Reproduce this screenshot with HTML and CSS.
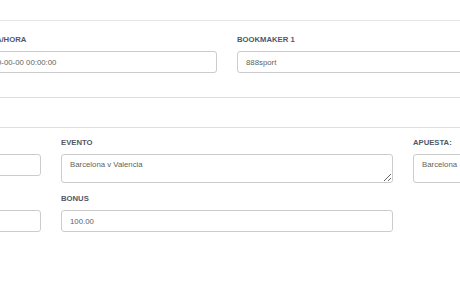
FILE: index.html
```html
<!DOCTYPE html>
<html lang="es">
<head>
<meta charset="utf-8">
<title>Apuesta</title>
<link rel="stylesheet" href="styles.css">
</head>
<body>
<div class="page">
  <section class="card card-top">
    <div class="grid grid-two">
      <div class="field">
        <label class="label">Fecha/Hora</label>
        <input class="control" type="text" value="0000-00-00 00:00:00">
      </div>
      <div class="field">
        <label class="label">Bookmaker 1</label>
        <input class="control" type="text" value="888sport">
      </div>
    </div>
  </section>
  <section class="card card-main">
    <div class="grid grid-three">
      <div class="field">
        <label class="label">&nbsp;</label>
        <input class="control" type="text" value="">
      </div>
      <div class="field">
        <label class="label">Evento</label>
        <textarea class="control area">Barcelona v Valencia</textarea>
      </div>
      <div class="field">
        <label class="label">Apuesta:</label>
        <textarea class="control area no-resize">Barcelona</textarea>
      </div>
      <div class="field">
        <label class="label">&nbsp;</label>
        <input class="control" type="text" value="">
      </div>
      <div class="field">
        <label class="label">Bonus</label>
        <input class="control" type="text" value="100.00">
      </div>
      <div class="field"></div>
    </div>
  </section>
</div>
</body>
</html>
```

FILE: styles.css
```css
html, body {
  margin: 0;
  padding: 0;
  background: #ffffff;
  overflow: hidden;
}
body {
  font-family: "Liberation Sans", Arial, sans-serif;
  width: 460px;
  height: 295px;
}
.page {
  margin-left: -59px;
  width: 573px;
  padding-top: 20px;
}
.card {
  background: #ffffff;
  border-top: 1px solid #e6e6e6;
  padding: 0 34px;
}
.card-top {
  padding-top: 13px;
  padding-bottom: 24px;
  border-bottom: 1px solid #dedede;
}
.card-main {
  margin-top: 29px;
  padding-top: 9px;
  padding-bottom: 80px;
  border-top-color: #dedede;
}
.grid {
  display: grid;
  column-gap: 20px;
  row-gap: 10px;
  align-items: start;
}
.grid-two {
  grid-template-columns: 242px 242px;
}
.grid-three {
  grid-template-columns: 66px 332px 66px;
}
.field {
  display: flex;
  flex-direction: column;
}
.label {
  display: block;
  font-size: 7.7px;
  line-height: 11px;
  font-weight: 700;
  text-transform: uppercase;
  color: #4f5769;
  margin-bottom: 6px;
}
.control {
  box-sizing: border-box;
  width: 100%;
  height: 22px;
  margin: 0;
  padding: 0 8px;
  border: 1px solid #cccccc;
  border-radius: 3px;
  background: #ffffff;
  font-family: "Liberation Sans", Arial, sans-serif;
  font-size: 7.8px;
  color: #5f5f5f;
  outline: none;
}
.area {
  height: 29px;
  padding: 4px 8px;
  line-height: 11px;
  resize: vertical;
}
.no-resize {
  resize: none;
}
```
